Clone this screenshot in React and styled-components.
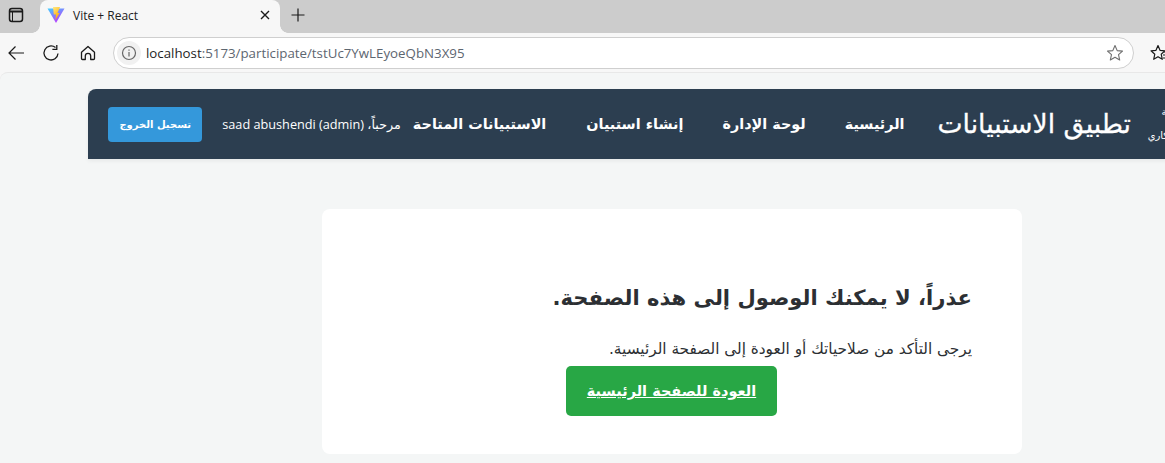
import React from 'react'
import styled, { createGlobalStyle } from 'styled-components'

const Global = createGlobalStyle`
  html, body { margin: 0; padding: 0; height: 100%; overflow: hidden; }
  body { background: #f7f7f7; font-family: "Open Sans", "Noto Sans", "DejaVu Sans", sans-serif; }
  * { box-sizing: border-box; }
`

const Shell = styled.div`
  width: 1165px;
  height: 463px;
  overflow: hidden;
  display: flex;
  flex-direction: column;
  background: #f7f7f7;
`

const TabStrip = styled.div`
  height: 33px;
  background: #cccccc;
  display: flex;
  align-items: flex-end;
  flex: none;
`

const SideIcon = styled.div`
  width: 40px;
  height: 33px;
  display: flex;
  align-items: center;
  justify-content: center;
  padding: 0 8px 3px 0;
`

const Tab = styled.div`
  position: relative;
  width: 240px;
  height: 33px;
  background: #f7f7f7;
  border-radius: 8px 8px 0 0;
  display: flex;
  align-items: center;
  padding: 0 9px 3px 7px;
  font-size: 12px;
  color: #222;
  &::before, &::after {
    content: "";
    position: absolute;
    bottom: 0;
    width: 8px;
    height: 8px;
  }
  &::before {
    left: -8px;
    background: radial-gradient(circle at 0 0, transparent 7.5px, #f7f7f7 8px);
  }
  &::after {
    right: -8px;
    background: radial-gradient(circle at 100% 0, transparent 7.5px, #f7f7f7 8px);
  }
`

const TabTitle = styled.span`
  flex: 1;
  margin-left: 8px;
`

const NewTab = styled.div`
  width: 35px;
  height: 33px;
  display: flex;
  align-items: center;
  justify-content: center;
  padding-bottom: 3px;
`

const Toolbar = styled.div`
  height: 39px;
  flex: none;
  background: #f7f7f7;
  display: flex;
  align-items: center;
  padding-left: 5px;
  overflow: hidden;
`

const NavIcon = styled.div`
  width: ${p => p.$w}px;
  height: 24px;
  flex: none;
  margin-left: ${p => p.$ml || 0}px;
  display: flex;
  align-items: center;
  justify-content: center;
`

const Omnibox = styled.div`
  width: 1021px;
  height: 32px;
  flex: none;
  margin-left: 12px;
  border: 1px solid #cfcfcf;
  border-radius: 16px;
  background: #fff;
  display: flex;
  align-items: center;
  padding: 0 9px 0 3px;
`

const InfoChip = styled.div`
  width: 24px;
  height: 24px;
  border-radius: 50%;
  background: #f1f1f1;
  display: flex;
  align-items: center;
  justify-content: center;
  flex: none;
`

const Url = styled.div`
  flex: 1;
  margin-left: 5px;
  padding-top: 1px;
  font-size: 13.3px;
  color: #5d6670;
  b { font-weight: 400; color: #1f1f1f; }
`

const Page = styled.div`
  flex: 1;
  background: #f4f6f6;
  border-top: 1px solid #e8e8e8;
  border-top-left-radius: 8px;
  padding: 16px 0 0 88px;
  overflow: hidden;
`

const Column = styled.div`
  width: 1168px;
  direction: rtl;
  font-family: "DejaVu Sans", "Noto Sans", sans-serif;
`

const Header = styled.header`
  height: 70px;
  background: #2c3e50;
  border-radius: 8px 8px 0 0;
  box-shadow: 0 2px 4px rgba(0, 0, 0, 0.06);
  color: #fff;
  display: flex;
  align-items: center;
  padding: 0 20px;
`

const Brand = styled.div`
  width: 90px;
  flex: none;
  font-size: 10px;
  line-height: 12px;
  text-align: center;
  white-space: nowrap;
  color: #fff;
`

const Title = styled.div`
  flex: none;
  margin-right: 15px;
  font-size: 26.6px;
  line-height: 34px;
  white-space: nowrap;
  -webkit-text-stroke: 0.3px #fff;
`

const NavLink = styled.a`
  flex: none;
  margin-right: ${p => p.$gap}px;
  font-size: 14.4px;
  font-weight: 700;
  color: #fff;
  white-space: nowrap;
`

const Welcome = styled.span`
  flex: none;
  margin-right: 12px;
  font-size: 12.7px;
  white-space: nowrap;
  color: #fff;
  font-family: "Open Sans", "DejaVu Sans", sans-serif;
`

const Logout = styled.button`
  flex: none;
  width: 94px;
  height: 35px;
  margin-right: 20px;
  padding: 0;
  background: #3498db;
  color: #fff;
  border: none;
  border-radius: 4px;
  font: 700 10px "DejaVu Sans", sans-serif;
`

const Card = styled.main`
  width: 700px;
  height: 245px;
  margin: 50px auto 0;
  background: #fff;
  border-radius: 8px;
  padding: 73px 50px 0;
`

const Heading = styled.h2`
  margin: 0;
  font-size: 21.1px;
  line-height: 32px;
  font-weight: 700;
  color: #2c2f33;
  white-space: nowrap;
`

const Message = styled.p`
  margin: 25px 0 0;
  font-size: 15.3px;
  line-height: 20px;
  color: #2c2f33;
  white-space: nowrap;
`

const BackLink = styled.a`
  display: flex;
  align-items: center;
  justify-content: center;
  width: 211px;
  height: 50px;
  margin: 7px 195px 0 0;
  background: #28a745;
  border-radius: 5px;
  color: #fff;
  font-size: 14.5px;
  font-weight: 700;
  text-decoration: underline;
  white-space: nowrap;
`

function ViteLogo() {
  return (
    <svg width="18" height="18" viewBox="0 0 18 18">
      <defs>
        <linearGradient id="viteA" x1="0" y1="0" x2="0.6" y2="1">
          <stop offset="0" stopColor="#41d1ff" />
          <stop offset="1" stopColor="#bd34fe" />
        </linearGradient>
        <linearGradient id="viteB" x1="0" y1="0" x2="0.5" y2="1">
          <stop offset="0" stopColor="#ffea83" />
          <stop offset="1" stopColor="#ffa800" />
        </linearGradient>
      </defs>
      <path d="M0.5 2.5 L17.5 2.5 L9 17 Z" fill="url(#viteA)" />
      <path d="M6 1 L13 1 L10.5 7 L12.5 7 L8.5 14 L9 8.5 L6.8 8.5 Z" fill="url(#viteB)" />
    </svg>
  )
}

function App() {
  return (
    <Shell>
      <Global />
      <TabStrip>
        <SideIcon>
          <svg width="16" height="16" viewBox="0 0 16 16" fill="none" stroke="#1a1a1a" strokeWidth="1.5">
            <rect x="1.5" y="1.5" width="13" height="13" rx="2.5" />
            <path d="M1.5 4.5H14.5" strokeWidth="2" />
            <path d="M4.5 4.5V14" strokeWidth="1" />
          </svg>
        </SideIcon>
        <Tab>
          <ViteLogo />
          <TabTitle>Vite + React</TabTitle>
          <svg width="12" height="12" viewBox="0 0 12 12" stroke="#1a1a1a" strokeWidth="1.4">
            <path d="M2 2L10 10M10 2L2 10" />
          </svg>
        </Tab>
        <NewTab>
          <svg width="16" height="16" viewBox="0 0 16 16" stroke="#1a1a1a" strokeWidth="1.2">
            <path d="M8 1.5V14.5M1.5 8H14.5" />
          </svg>
        </NewTab>
      </TabStrip>
      <Toolbar>
        <NavIcon $w={22}>
          <svg width="18" height="18" viewBox="0 0 18 18" fill="none" stroke="#1a1a1a" strokeWidth="1.2">
            <path d="M17 9H2M8.5 2.5L2 9L8.5 15.5" />
          </svg>
        </NavIcon>
        <NavIcon $w={48}>
          <svg width="18" height="18" viewBox="0 0 18 18" fill="none" stroke="#1a1a1a" strokeWidth="1.3">
            <path d="M16 9.5A7 7 0 1 1 13.5 3.6" />
            <path d="M14.8 1V5.4H10.4" />
          </svg>
        </NavIcon>
        <NavIcon $w={26}>
          <svg width="18" height="18" viewBox="0 0 18 18" fill="none" stroke="#1a1a1a" strokeWidth="1.3">
            <path d="M2.5 8.2L9 2.5L15.5 8.2V14.5A1 1 0 0 1 14.5 15.5H11.7V12A2.7 2.7 0 0 0 6.3 12V15.5H3.5A1 1 0 0 1 2.5 14.5Z" strokeLinejoin="round" />
          </svg>
        </NavIcon>
        <Omnibox>
          <InfoChip>
            <svg width="16" height="16" viewBox="0 0 16 16" fill="none" stroke="#666" strokeWidth="1.2">
              <circle cx="8" cy="8" r="6.5" />
              <path d="M8 7V11.5M8 4.5V5.8" />
            </svg>
          </InfoChip>
          <Url><b>localhost</b>:5173/participate/tstUc7YwLEyoeQbN3X95</Url>
          <svg width="18" height="18" viewBox="0 0 18 18" fill="none" stroke="#6f6f6f" strokeWidth="1.1">
            <path d="M9 1.5L11.2 6.6L16.5 7.1L12.5 10.7L13.7 16L9 13.2L4.3 16L5.5 10.7L1.5 7.1L6.8 6.6Z" strokeLinejoin="round" />
          </svg>
        </Omnibox>
        <NavIcon $w={24} $ml={15}>
          <svg width="22" height="18" viewBox="0 0 22 18" fill="none" stroke="#1a1a1a" strokeWidth="1.2">
            <path d="M8 1.5L10 6.3L15 6.8L11.2 10.2L12.3 15.3L8 12.7L3.7 15.3L4.8 10.2L1 6.8L6 6.3Z" strokeLinejoin="round" />
            <path d="M14 8H22M13 11H22M13 14H22" />
          </svg>
        </NavIcon>
      </Toolbar>
      <Page>
        <Column>
          <Header>
            <Brand>جامعة الجامعة<br />مركز التميز<br />مركز الدعم الابتكاري</Brand>
            <Title>تطبيق الاستبيانات</Title>
            <NavLink $gap={33}>الرئيسية</NavLink>
            <NavLink $gap={39}>لوحة الإدارة</NavLink>
            <NavLink $gap={39}>إنشاء استبيان</NavLink>
            <NavLink $gap={40}>الاستبيانات المتاحة</NavLink>
            <Welcome>مرحباً، saad abushendi (admin)</Welcome>
            <Logout>تسجيل الخروج</Logout>
          </Header>
          <Card>
            <Heading>عذراً، لا يمكنك الوصول إلى هذه الصفحة.</Heading>
            <Message>يرجى التأكد من صلاحياتك أو العودة إلى الصفحة الرئيسية.</Message>
            <BackLink>العودة للصفحة الرئيسية</BackLink>
          </Card>
        </Column>
      </Page>
    </Shell>
  )
}

export default App
